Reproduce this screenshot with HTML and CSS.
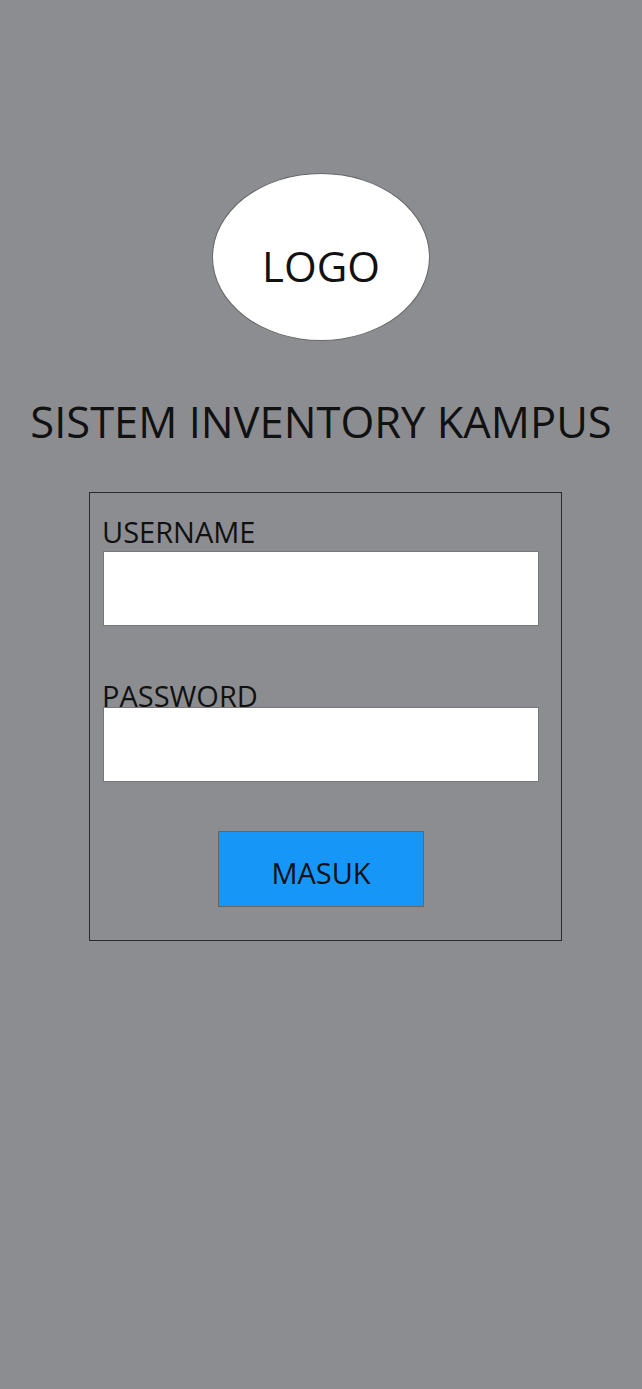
FILE: index.html
```html
<!DOCTYPE html>
<html lang="id">
<head>
<meta charset="utf-8">
<title>Sistem Inventory Kampus</title>
<link rel="stylesheet" href="styles.css">
</head>
<body>
<main class="page">
  <div class="logo"><span>LOGO</span></div>
  <h1 class="title">SISTEM INVENTORY KAMPUS</h1>
  <form class="login">
    <label class="label" for="username">USERNAME</label>
    <input class="field" id="username" type="text">
    <label class="label label-overlap" for="password">PASSWORD</label>
    <input class="field" id="password" type="password">
    <button class="btn" type="button">MASUK</button>
  </form>
</main>
</body>
</html>
```

FILE: styles.css
```css
html, body {
  margin: 0;
  padding: 0;
  background: #8c8d91;
}
body {
  font-family: "Open Sans", "Noto Sans", sans-serif;
  color: #111;
  min-height: 1389px;
}
.page {
  display: flex;
  flex-direction: column;
  padding-top: 173px;
}
.logo {
  box-sizing: border-box;
  width: 218px;
  height: 168px;
  margin-left: 212px;
  border: 1px solid #666;
  border-radius: 50%;
  background: #fff;
  display: flex;
  align-items: center;
  justify-content: center;
  padding-top: 17px;
  font-size: 42px;
}
.title {
  margin: 51px 0 0 0;
  font-weight: 400;
  font-size: 43.5px;
  text-align: center;
  line-height: normal;
}
.login {
  box-sizing: border-box;
  width: 473px;
  margin: 41px 0 0 89px;
  border: 1px solid #2a2a2a;
  padding: 19px 0 33px 13px;
  display: flex;
  flex-direction: column;
  align-items: flex-start;
}
.label {
  font-size: 29px;
  line-height: normal;
  margin-left: -1px;
  position: relative;
  z-index: 0;
}
.label-overlap {
  margin-top: 50px;
  margin-bottom: -8.5px;
}
.field {
  box-sizing: border-box;
  width: 436px;
  height: 75px;
  margin: 0;
  border: 1px solid #777;
  background: #fff;
  position: relative;
  z-index: 1;
  outline: none;
}
.btn {
  box-sizing: border-box;
  width: 206px;
  height: 76px;
  margin: 49px 0 0 115px;
  border: 1px solid #666;
  background: #1697f8;
  color: #111;
  font-family: inherit;
  font-size: 29px;
  padding: 8px 0 0 0;
  display: flex;
  align-items: center;
  justify-content: center;
}
```
